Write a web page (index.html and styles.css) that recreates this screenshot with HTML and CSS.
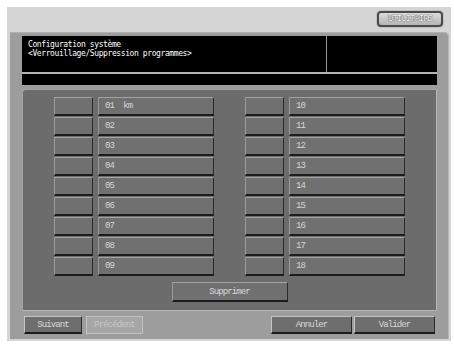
FILE: index.html
```html
<!DOCTYPE html>
<html lang="fr">
<head>
<meta charset="utf-8">
<title>Configuration système</title>
<link rel="stylesheet" href="styles.css">
</head>
<body>
<div class="screen">
  <div class="topbar">
    <button class="util-btn">UTILITAIRE</button>
  </div>
  <div class="frame">
    <div class="header">
      <div class="header-title">Configuration système<br>&lt;Verrouillage/Suppression programmes&gt;</div>
      <div class="header-side"></div>
    </div>
    <div class="msg-strip"></div>
    <div class="panel">
      <div class="groups">
        <div class="group">
          <div class="row"><span class="key"></span><span class="name">01<span class="tag">km</span></span></div>
          <div class="row"><span class="key"></span><span class="name">02</span></div>
          <div class="row"><span class="key"></span><span class="name">03</span></div>
          <div class="row"><span class="key"></span><span class="name">04</span></div>
          <div class="row"><span class="key"></span><span class="name">05</span></div>
          <div class="row"><span class="key"></span><span class="name">06</span></div>
          <div class="row"><span class="key"></span><span class="name">07</span></div>
          <div class="row"><span class="key"></span><span class="name">08</span></div>
          <div class="row"><span class="key"></span><span class="name">09</span></div>
        </div>
        <div class="group">
          <div class="row"><span class="key"></span><span class="name">10</span></div>
          <div class="row"><span class="key"></span><span class="name">11</span></div>
          <div class="row"><span class="key"></span><span class="name">12</span></div>
          <div class="row"><span class="key"></span><span class="name">13</span></div>
          <div class="row"><span class="key"></span><span class="name">14</span></div>
          <div class="row"><span class="key"></span><span class="name">15</span></div>
          <div class="row"><span class="key"></span><span class="name">16</span></div>
          <div class="row"><span class="key"></span><span class="name">17</span></div>
          <div class="row"><span class="key"></span><span class="name">18</span></div>
        </div>
      </div>
      <div class="delete-row">
        <button class="btn delete-btn">Supprimer</button>
      </div>
    </div>
    <div class="footer">
      <div class="footer-left">
        <button class="btn foot-btn">Suivant</button>
        <button class="btn foot-btn disabled">Précédent</button>
      </div>
      <div class="footer-right">
        <button class="btn foot-btn wide">Annuler</button>
        <button class="btn foot-btn wide">Valider</button>
      </div>
    </div>
  </div>
</div>
</body>
</html>
```

FILE: styles.css
```css
* { box-sizing: border-box; }

html, body {
  margin: 0;
  padding: 0;
  background: #ffffff;
}

body {
  font-family: "DejaVu Sans Mono", "Liberation Mono", monospace;
  font-size: 8px;
  letter-spacing: -0.4px;
}

.screen {
  margin: 7px 3px 0 7px;
  width: 444px;
  height: 334px;
  background: #d5d5d5;
  padding-top: 4px;
}

.topbar {
  display: flex;
  justify-content: flex-end;
  height: 16px;
  padding-right: 8px;
}

button {
  font-family: inherit;
  font-size: inherit;
  letter-spacing: inherit;
  margin: 0;
  padding: 0;
  cursor: default;
}

.util-btn {
  width: 66px;
  height: 16px;
  border: 2px solid #4a4a4a;
  border-radius: 4px;
  background: linear-gradient(#dcdcdc, #b4b4b4);
  box-shadow: 0 0 0 1px #c0c0c0;
  color: #f2f2f2;
  text-shadow: 0 0 1px #444, 0 0 1px #444;
  font-family: "Liberation Mono", monospace;
  font-size: 9px;
  letter-spacing: -1px;
  line-height: 12px;
}

.frame {
  margin: 5px 0 0 3px;
  width: 439px;
  height: 307px;
  background: #9d9d9d;
  border-top-right-radius: 5px;
  box-shadow: inset -1px 0 0 #b8b8b8, inset 0 1px 0 #b0b0b0;
  padding: 4px 12px 0 12px;
  display: flex;
  flex-direction: column;
}

.header {
  display: flex;
  height: 36px;
  background: #000;
}

.header-title {
  width: 305px;
  border-right: 1px solid #9a9a9a;
  color: #ffffff;
  padding: 4px 0 0 6px;
  line-height: 9px;
}

.header-side {
  flex: 1;
}

.msg-strip {
  height: 13px;
  background: #000;
  border-top: 2px solid #b4b4b4;
}

.panel {
  margin-top: 4px;
  height: 222px;
  background: #6c6c6c;
  border: 1px solid #b8b8b8;
  border-top-color: #a4a4a4;
  border-left-color: #a4a4a4;
  border-top-left-radius: 4px;
  padding: 7px 31px 0 31px;
  display: flex;
  flex-direction: column;
}

.groups {
  display: flex;
  justify-content: space-between;
}

.group {
  display: flex;
  flex-direction: column;
  gap: 1px;
}

.row {
  display: flex;
  gap: 5px;
  height: 19px;
}

.key,
.name,
.btn {
  background: #707070;
  border-top: 1px solid #a2a2a2;
  border-left: 1px solid #9a9a9a;
  border-bottom: 2px solid #1c1c1c;
  border-right: 1px solid #2a2a2a;
}

.key {
  width: 39px;
}

.name {
  width: 116px;
  color: #d6d6d6;
  padding-left: 6px;
  line-height: 16px;
  font-family: "Liberation Mono", monospace;
  font-size: 9px;
  letter-spacing: -0.8px;
}

.tag {
  margin-left: 9px;
}

.delete-row {
  display: flex;
  justify-content: center;
  margin-top: 6px;
}

.btn {
  color: #d8d8d8;
  height: 20px;
  line-height: 16px;
  font-family: "Liberation Mono", monospace;
  font-size: 9px;
  letter-spacing: -0.9px;
}

.delete-btn {
  width: 116px;
}

.footer {
  display: flex;
  justify-content: space-between;
  margin-top: 5px;
  padding: 0 2px;
}

.footer-left,
.footer-right {
  display: flex;
  gap: 4px;
}

.footer-right {
  gap: 2px;
}

.foot-btn {
  height: 18px;
  width: 58px;
  line-height: 14px;
  background: #6e6e6e;
  border-top-color: #c4c4c4;
  border-left-color: #c4c4c4;
}

.foot-btn.wide {
  width: 81px;
}

.foot-btn.disabled {
  width: 57px;
  background: #a6a6a6;
  color: #c6c6c6;
  border: 1px solid #c2c2c2;
}
```
